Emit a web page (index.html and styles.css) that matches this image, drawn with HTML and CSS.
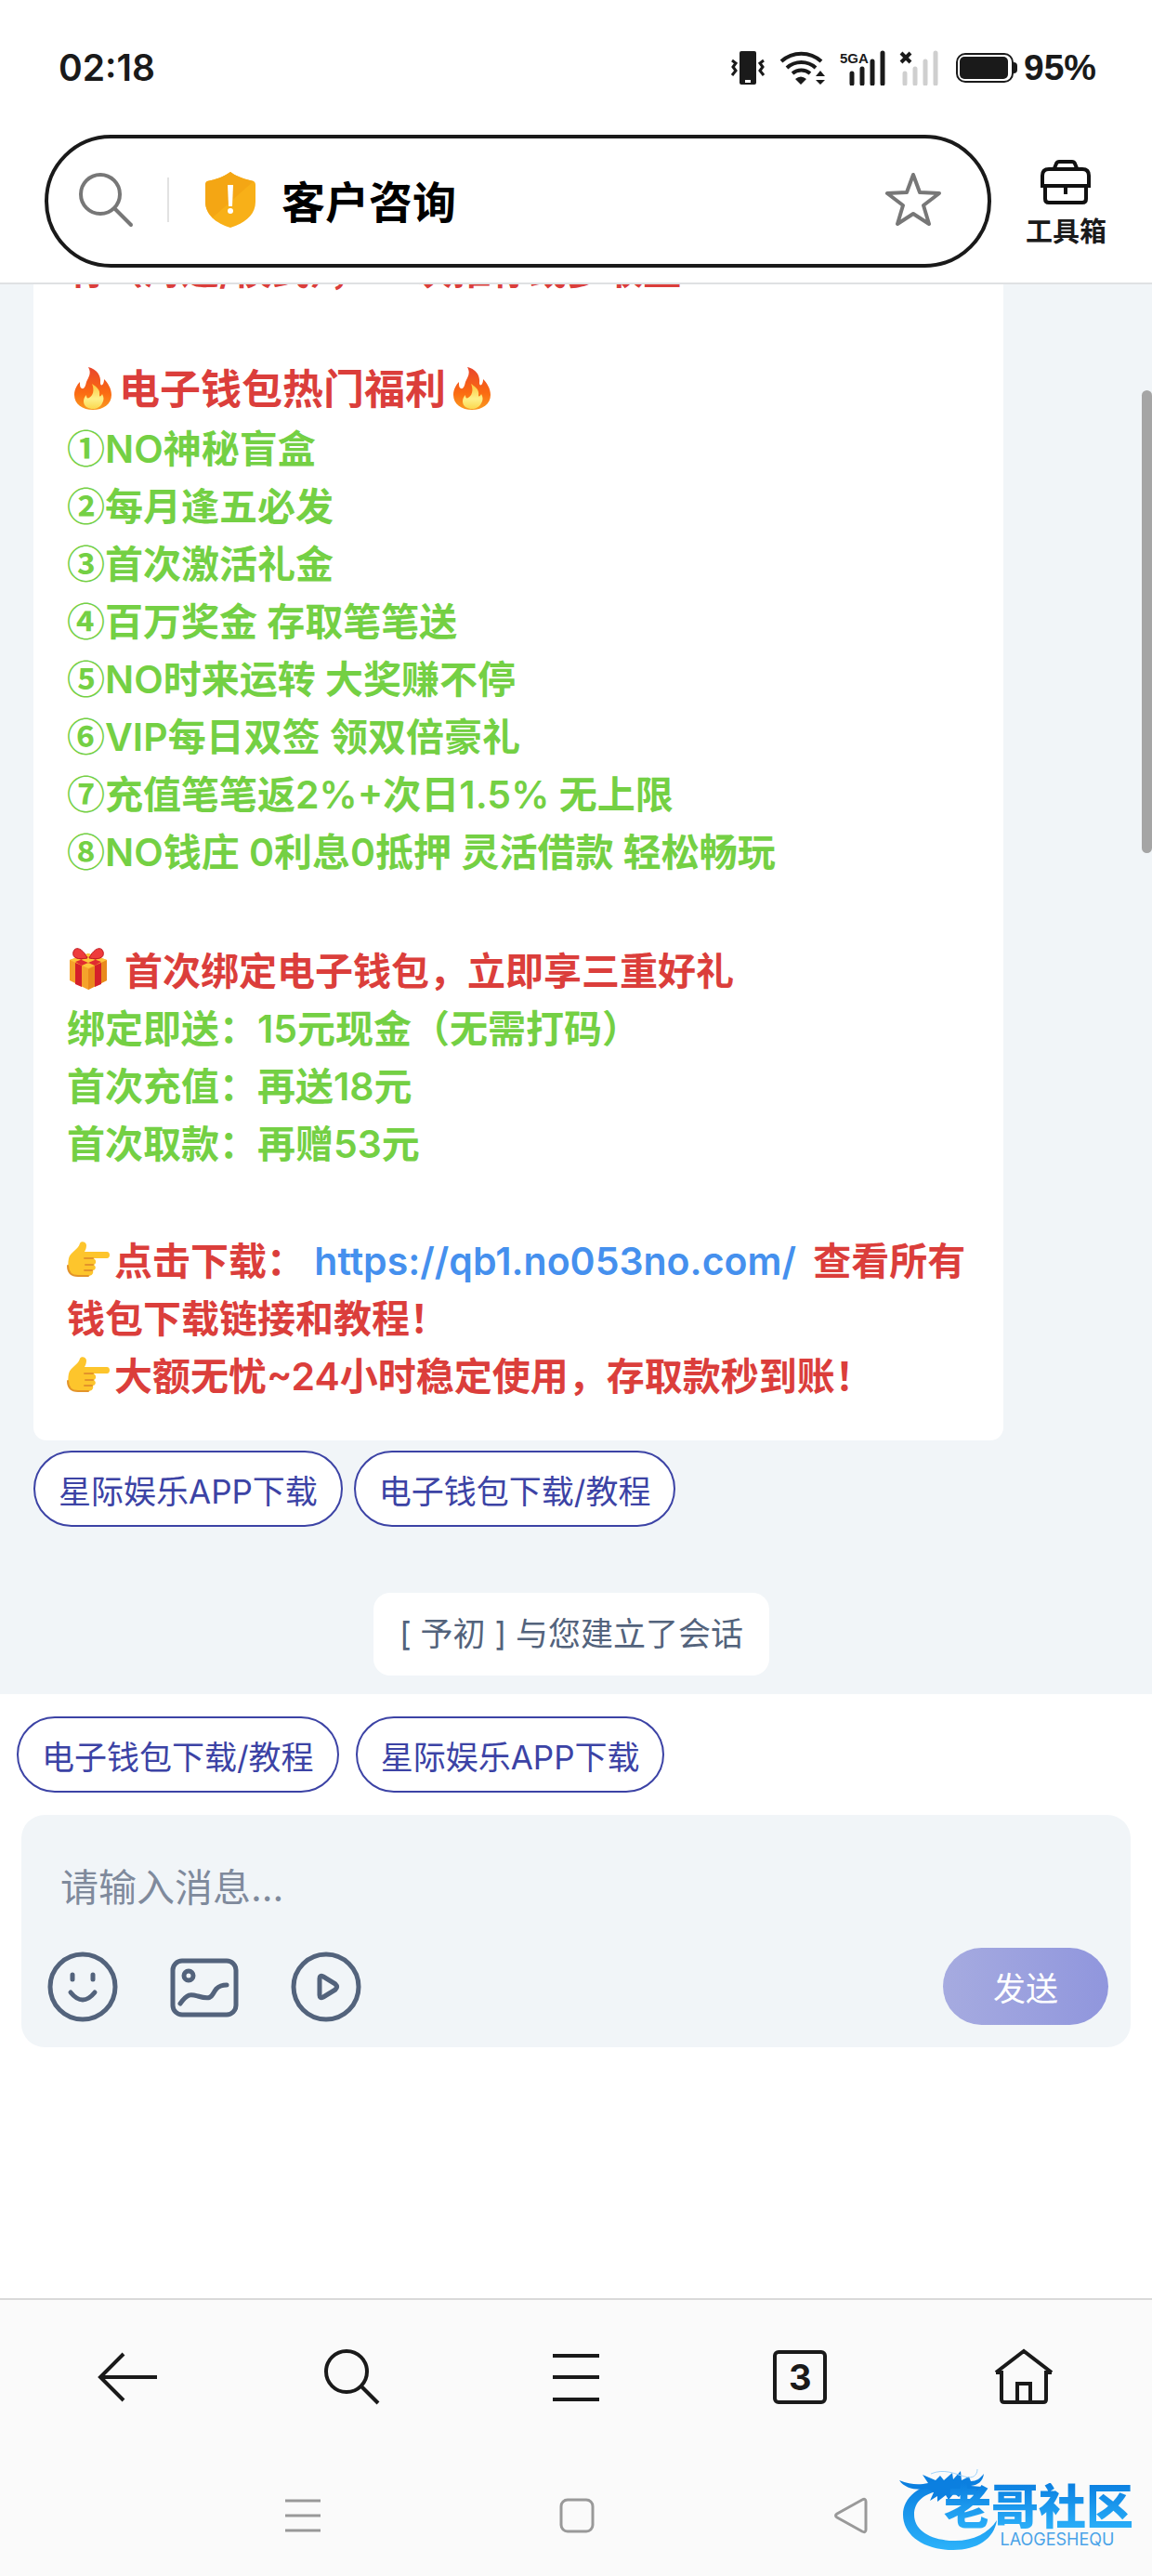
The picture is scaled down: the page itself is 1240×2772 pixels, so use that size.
FILE: index.html
```html
<!DOCTYPE html>
<html lang="zh-CN">
<head>
    <meta charset="UTF-8">
    <meta name="viewport" content="width=device-width, initial-scale=1.0">
    <title>客户咨询</title>
    <link rel="stylesheet" href="styles.css">
</head>
<body>

    <!-- Shared emoji -->
    <svg class="sprite" width="0" height="0">
        <defs>
            <linearGradient id="fire-g" x1="0" y1="0" x2="0" y2="1">
                <stop offset="0" stop-color="#e8452c"/>
                <stop offset="0.6" stop-color="#fb6a12"/>
                <stop offset="1" stop-color="#f99a20"/>
            </linearGradient>
            <linearGradient id="flame-g" x1="0" y1="0" x2="0" y2="1">
                <stop offset="0" stop-color="#fdc53c"/>
                <stop offset="0.6" stop-color="#fdf08a"/>
                <stop offset="1" stop-color="#fbd84e"/>
            </linearGradient>
            <linearGradient id="logo-g" x1="0" y1="0" x2="0" y2="1">
                <stop offset="0" stop-color="#0b7fe0"/>
                <stop offset="1" stop-color="#2cb2fa"/>
            </linearGradient>
        </defs>
        <symbol id="fire" viewBox="0 0 40 46">
            <path d="M15 0c9 2 14 9 13 17 0 3 2 3 3 1 1-2 1-4 1-5 4 4 8 10 8 17 0 10-9 16-20 16S0 40 0 30c0-6 3-11 6-14 0 4 0 6 2 7 3 1 4-3 5-7 2-5 6-9 2-16z" fill="url(#fire-g)"/>
            <path d="M19 18c6 4 9 7 8 12 0 3 2 1 3-1 2 3 2 7 0 10-2 4-6 6-10 6s-10-2-10-8c0-3 1-5 3-7 0 3 1 4 3 3 4-2 6-8 3-15z" fill="url(#flame-g)"/>
        </symbol>
        <symbol id="point" viewBox="0 0 46 38">
            <path d="M2 18C4 11 12 9 14 2c1-3 7-2 7 2 0 3-1 5-2 7h24c4 0 4 7 0 7H28c4 1 4 6 1 7 3 2 2 6-1 6 1 3-1 6-5 6H12C2 37 0 29 2 18z" fill="#fdc52c"/>
            <path d="M28 18h-9m9 7h-8m7 6h-8M23 37H12c-8 0-11-5-11-11" fill="none" stroke="#e3942a" stroke-width="2" stroke-linecap="round"/>
        </symbol>
    </svg>

    <header class="top">
        <div class="status">
            <span class="time">02:18</span>
            <div class="status-icons">
                <svg width="38" height="38" viewBox="0 0 38 38">
                    <path d="M12 1h14q2 0 2 2v32q0 2-2 2H12q-2 0-2-2V3q0-2 2-2zM16 32v3h6v-3z" fill="#1a1a1a" fill-rule="evenodd"/>
                    <path d="M2 11l4 3-3 4 3 4-4 5M36 11l-4 3 3 4-3 4 4 5" fill="none" stroke="#1a1a1a" stroke-width="3"/>
                </svg>
                <svg width="52" height="38" viewBox="0 0 52 38">
                    <path d="M3 12a32 32 0 0 1 43 0M9 19a23 23 0 0 1 31 0M15 25a15 15 0 0 1 19 0" fill="none" stroke="#1a1a1a" stroke-width="4"/>
                    <path d="M24 37l-6-6q6-5 12 0zM45 22l5 6H40zM45 37l5-5H40z" fill="#1a1a1a"/>
                </svg>
                <svg width="50" height="38" viewBox="0 0 50 38">
                    <text class="net-label" x="0" y="14">5GA</text>
                    <path d="M13 25v11M24 20v16M35 12v24M46 3v33" stroke="#1a1a1a" stroke-width="5" stroke-linecap="round"/>
                </svg>
                <svg width="42" height="38" viewBox="0 0 42 38">
                    <path d="M2 3l10 10M12 3L2 13" stroke="#1a1a1a" stroke-width="4"/>
                    <path d="M6 25v11M17 20v16M28 12v24M39 3v33" stroke="#cfcfcf" stroke-width="5" stroke-linecap="round"/>
                </svg>
                <svg class="battery" width="68" height="34" viewBox="0 0 68 34">
                    <rect x="2" y="2" width="60" height="30" rx="9" fill="none" stroke="#1a1a1a" stroke-width="2"/>
                    <rect x="5" y="5" width="52" height="24" rx="5" fill="#1a1a1a"/>
                    <path d="M63 11q4 0 4 4v4q0 4-4 4z" fill="#1a1a1a"/>
                </svg>
                <span class="percent">95%</span>
            </div>
        </div>

        <div class="address-row">
            <div class="address">
                <svg width="60" height="60" viewBox="0 0 60 60" fill="none" stroke="#777" stroke-width="4" stroke-linecap="round">
                    <circle cx="24" cy="24" r="21"/>
                    <path d="M40 40l17 17"/>
                </svg>
                <span class="divider"></span>
                <svg width="54" height="60" viewBox="0 0 54 60">
                    <path d="M27 0c8 6 16 8 25 10 2 1 2 3 2 5v17c0 14-11 23-27 28C11 55 0 46 0 32V15c0-2 0-4 2-5C11 8 19 6 27 0z" fill="#f8b018"/>
                    <path d="M27 0c8 6 16 8 25 10L8 49C3 44 0 39 0 32V15c0-2 0-4 2-5C11 8 19 6 27 0z" fill="#f4a614"/>
                    <path d="M24 14h6l-1 23h-4z" fill="#fff"/>
                    <circle cx="27" cy="42" r="3" fill="#fff"/>
                </svg>
                <h1>客户咨询</h1>
                <svg width="60" height="60" viewBox="0 0 60 60" fill="none" stroke="#777" stroke-width="4" stroke-linejoin="round">
                    <path d="M30 3l7 19 21 1-17 13 6 20-17-11-17 11 6-20L2 23l21-1z"/>
                </svg>
            </div>
            <a class="toolbox" href="#">
                <svg width="54" height="48" viewBox="0 0 54 48" fill="none" stroke="#111" stroke-width="4">
                    <path d="M15 9l2-5q1-2 3-2h14q2 0 3 2l2 5M2 28V17q0-7 7-7h36q7 0 7 7v11zM5 28v14q0 4 4 4h36q4 0 4-4V28M27 28v9"/>
                </svg>
                <span>工具箱</span>
            </a>
        </div>
    </header>

    <main class="chat">
        <div class="message">
            <p class="red">有（海通/模式）， 一次推荐或多收益</p>
            <p class="red title"><svg class="fire" role="img" aria-label="🔥"><use href="#fire"/></svg>电子钱包热门福利<svg class="fire" role="img" aria-label="🔥"><use href="#fire"/></svg></p>
            <p class="green"><span class="num">①</span>NO神秘盲盒<br>
            <span class="num">②</span>每月逢五必发<br>
            <span class="num">③</span>首次激活礼金<br>
            <span class="num">④</span>百万奖金 存取笔笔送<br>
            <span class="num">⑤</span>NO时来运转 大奖赚不停<br>
            <span class="num">⑥</span>VIP每日双签 领双倍豪礼<br>
            <span class="num">⑦</span>充值笔笔返2%+次日1.5% 无上限<br>
            <span class="num">⑧</span>NO钱庄 0利息0抵押 灵活借款 轻松畅玩</p>
            <p class="red gift-line"><svg class="gift" viewBox="0 0 46 46" role="img" aria-label="🎁">
                <path d="M3 13l20-7 20 7v22l-20 10L3 35z" fill="#f5a32b"/>
                <path d="M23 23l20-10v22L23 45z" fill="#e98a1c"/>
                <path d="M3 13l20-7 20 7-20 9z" fill="#fdc63a"/>
                <path d="M9 16l7 3v23l-7-3zM30 19l7-3v23l-7 3z" fill="#d5202a"/>
                <path d="M9 15L31 7l6 3-21 9zM37 15L15 7l-6 3 21 9z" fill="#e02c30"/>
                <path d="M22 11C12 13 5 11 7 4c2-6 10-4 15 7zM24 11c10 2 17 0 15-7-2-6-10-4-15 7z" fill="#ee3b3b" stroke="#c01820" stroke-width="1"/>
            </svg>首次绑定电子钱包，立即享三重好礼</p>
            <p class="green">绑定即送：15元现金（无需打码）<br>
            首次充值：再送18元<br>
            首次取款：再赠53元</p>
            <p class="red links"><svg class="point" role="img" aria-label="👉"><use href="#point"/></svg>点击下载： <a href="#">https://qb1.no053no.com/</a> 查看所有<br>
            钱包下载链接和教程！<br>
            <svg class="point" role="img" aria-label="👉"><use href="#point"/></svg>大额无忧~24小时稳定使用，存取款秒到账！</p>
        </div>
        <div class="replies">
            <button class="chip">星际娱乐APP下载</button>
            <button class="chip">电子钱包下载/教程</button>
        </div>
        <div class="notice">[ 予初 ] 与您建立了会话</div>
        <span class="scrollbar"></span>
    </main>

    <section class="composer">
        <div class="shortcuts">
            <button class="chip">电子钱包下载/教程</button>
            <button class="chip">星际娱乐APP下载</button>
        </div>
        <form class="input-box">
            <input type="text" placeholder="请输入消息..." aria-label="请输入消息">
            <div class="tools">
                <button type="button" class="icon-btn" aria-label="表情">
                    <svg width="76" height="76" viewBox="0 0 76 76" fill="none" stroke="#53637c" stroke-width="5" stroke-linecap="round">
                        <circle cx="38" cy="38" r="35"/>
                        <path d="M27 25v5M49 25v5M25 44q13 16 26 0"/>
                    </svg>
                </button>
                <button type="button" class="icon-btn" aria-label="图片">
                    <svg width="76" height="76" viewBox="0 0 76 76" fill="none" stroke="#53637c" stroke-width="5" stroke-linecap="round">
                        <rect x="4" y="10" width="68" height="58" rx="10"/>
                        <circle cx="21" cy="26" r="5"/>
                        <path d="M12 56c8-11 11-10 19-8 17 5 14-1 20-8 3-3 6-4 11-4"/>
                    </svg>
                </button>
                <button type="button" class="icon-btn" aria-label="视频">
                    <svg width="76" height="76" viewBox="0 0 76 76" fill="none" stroke="#53637c" stroke-width="5" stroke-linejoin="round">
                        <circle cx="38" cy="38" r="35"/>
                        <path d="M31 29v18q0 4 4 2l13-8q3-3 0-6l-13-8q-4-2-4 2z"/>
                    </svg>
                </button>
                <button type="submit" class="send">发送</button>
            </div>
        </form>
    </section>

    <footer class="bottom">
        <nav class="browser-nav">
            <a href="#" aria-label="返回">
                <svg width="68" height="64" viewBox="0 0 68 64"><path d="M65 32H4M29 7L4 32l25 25"/></svg>
            </a>
            <a href="#" aria-label="搜索">
                <svg width="64" height="64" viewBox="0 0 64 64"><circle cx="26" cy="26" r="22"/><path d="M42 42l18 18"/></svg>
            </a>
            <a href="#" aria-label="菜单">
                <svg width="56" height="64" viewBox="0 0 56 64"><path d="M3 9h50M3 32h50M3 56h50"/></svg>
            </a>
            <a href="#" aria-label="标签页"><span class="tabs">3</span></a>
            <a href="#" aria-label="主页">
                <svg width="64" height="64" viewBox="0 0 64 64"><path d="M2 27L32 4l30 23M2 27h6v29q0 3 3 3h42q3 0 3-3V27h6M25 59V39h14v20"/></svg>
            </a>
        </nav>
        <div class="system-nav">
            <svg width="40" height="40" viewBox="0 0 40 40"><path d="M1 4h38M1 20h38M1 36h38"/></svg>
            <svg width="40" height="40" viewBox="0 0 40 40"><rect x="3" y="3" width="34" height="34" rx="7"/></svg>
            <svg width="40" height="40" viewBox="0 0 40 40"><path d="M36 5v30q0 4-4 2L5 22q-3-2 0-4L32 3q4-2 4 2z"/></svg>
        </div>
        <div class="watermark">
            <svg width="124" height="92" viewBox="0 0 124 92">
                <path d="M48 17C21 19 4 34 4 52c0 22 22 38 54 38 26 0 44-12 47-32-9 14-25 22-45 22-26 0-44-11-44-28 0-14 10-23 32-27z" fill="url(#logo-g)"/>
                <path d="M0 15c12 5 22 5 31 3l-6-9 14 6 5-5 4 5 9-8 1 7 8-9 1 10 8-4 2 5c6 0 10-3 14-8-1 8-6 12-14 13l12 1-5 5-14-1-6 7-5-4-6 7-3-5-9 7v-6l-8 5 4-9-7-4C18 26 6 24 0 15z" fill="#0b7fe0"/>
                <path d="M34 8C48 2 60 8 70 11s14-2 14-8" fill="none" stroke="#9fd2fa" stroke-width="1"/>
            </svg>
            <div class="mark-text">
                <strong>老哥社区</strong>
                <small>LAOGESHEQU</small>
            </div>
        </div>
    </footer>

</body>
</html>
```
FILE: styles.css
```css
* {
    box-sizing: border-box;
}
body {
    font-family: Inter, "Noto Sans CJK SC", sans-serif;
    margin: 0;
    height: 100vh;
    display: flex;
    flex-direction: column;
    background-color: #fff;
    color: #1a1a1a;
}
svg {
    display: block;
    flex: none;
}
a {
    text-decoration: none;
    color: inherit;
}
button, input {
    font-family: inherit;
    border: none;
    margin: 0;
    padding: 0;
}
.sprite {
    position: absolute;
}

/* Header */
.top {
    flex: none;
    background-color: #fff;
    border-bottom: 2px solid #dfe1e3;
}
.status {
    display: flex;
    align-items: center;
    justify-content: space-between;
    height: 145px;
    padding: 0 60px 0 63px;
}
.time {
    font-size: 39px;
    font-weight: 600;
}
.status-icons {
    display: flex;
    align-items: center;
    gap: 14px;
}
.net-label {
    font-family: "Liberation Sans", sans-serif;
    font-size: 15px;
    font-weight: bold;
    fill: #1a1a1a;
}
.battery {
    margin-left: 4px;
}
.percent {
    margin-left: -8px;
    font-family: "Liberation Sans", sans-serif;
    font-size: 39px;
    font-weight: bold;
}
.address-row {
    display: flex;
    align-items: center;
    gap: 37px;
    padding: 0 49px 16px 48px;
}
.address {
    flex: 1;
    display: flex;
    align-items: center;
    height: 143px;
    padding: 0 50px 4px 32px;
    border: 4px solid #1a1a1a;
    border-radius: 72px;
}
.divider {
    width: 2px;
    height: 48px;
    margin: 0 39px 0 36px;
    background-color: #e2e2e2;
}
.address h1 {
    flex: 1;
    margin: 0 0 0 28px;
    padding-top: 6px;
    font-size: 47px;
    line-height: 64px;
    font-weight: bold;
    color: #000;
}
.toolbox {
    display: flex;
    flex-direction: column;
    align-items: center;
    gap: 12px;
    padding-top: 6px;
    font-size: 29px;
    line-height: 36px;
    font-weight: bold;
}

/* Chat */
.chat {
    flex: 1;
    min-height: 0;
    position: relative;
    display: flex;
    flex-direction: column;
    justify-content: flex-end;
    align-items: flex-start;
    overflow: hidden;
    padding: 0 160px 20px 36px;
    background-color: #f1f5f8;
}
.message {
    flex: none;
    align-self: stretch;
    padding: 38px 36px;
    border-radius: 14px;
    background-color: #fff;
    font-size: 41px;
    line-height: 62px;
    font-weight: 600;
}
.message p {
    margin: 0;
}
.message a {
    margin-right: 8px;
    color: #4590ee;
}
.red {
    color: #db3e3b;
}
.green {
    color: #74d044;
}
.message .title, .message .links {
    margin-top: 64px;
}
.message .gift-line {
    margin-top: 66px;
}
.title {
    font-size: 44px;
    line-height: 66px;
}
.num {
    font-family: "Noto Sans CJK SC", sans-serif;
    line-height: 1;
}
.fire, .gift, .point {
    display: inline-block;
    vertical-align: -6px;
}
.fire {
    width: 40px;
    height: 46px;
    margin: 0 8px;
}
.gift {
    width: 46px;
    height: 46px;
    margin-right: 16px;
}
.point {
    width: 46px;
    height: 38px;
    margin-right: 5px;
    vertical-align: -2px;
}
.replies, .shortcuts {
    display: flex;
}
.replies {
    flex: none;
    gap: 12px;
    margin-top: 11px;
}
.chip {
    height: 82px;
    padding: 0 25px;
    border: 2px solid #3c43a5;
    border-radius: 41px;
    background-color: #fff;
    color: #3c43a5;
    font-size: 35px;
}
.notice {
    flex: none;
    align-self: center;
    margin: 71px -114px 0 0;
    padding: 0 28px;
    border-radius: 18px;
    background-color: #fff;
    color: #53637c;
    font-size: 35px;
    line-height: 89px;
}
.scrollbar {
    position: absolute;
    top: 114px;
    right: 0;
    width: 11px;
    height: 498px;
    border-radius: 6px;
    background-color: #a5a5a5;
}

/* Message input */
.composer {
    flex: none;
    padding: 24px 23px 270px;
}
.shortcuts {
    gap: 18px;
    margin: 0 0 24px -5px;
}
.input-box {
    padding: 46px 24px 24px;
    border-radius: 25px;
    background-color: #f1f5f8;
}
.input-box input {
    display: block;
    width: 100%;
    height: 64px;
    padding: 0 18px;
    background: none;
    font-size: 41px;
    color: #53637c;
}
.input-box input::placeholder {
    color: #7f8a9c;
}
.tools {
    display: flex;
    align-items: center;
    gap: 55px;
    margin-top: 33px;
    padding-left: 4px;
}
.icon-btn {
    background: none;
}
.send {
    width: 178px;
    height: 83px;
    margin-left: auto;
    border-radius: 42px;
    background: linear-gradient(90deg, #a6abe0, #9096dd);
    color: #fff;
    font-size: 35px;
}

/* Bottom bars */
.bottom {
    flex: none;
    position: relative;
    border-top: 2px solid #d9d9d9;
    background-color: #fafafa;
}
.bottom svg {
    fill: none;
    stroke: #1a1a1a;
    stroke-width: 4;
}
.browser-nav {
    display: flex;
    height: 166px;
    padding: 0 17px;
}
.browser-nav a {
    flex: 1;
    display: flex;
    align-items: center;
    justify-content: center;
}
.tabs {
    width: 58px;
    line-height: 50px;
    border: 4px solid #1a1a1a;
    border-radius: 6px;
    text-align: center;
    font-size: 38px;
    font-weight: bold;
}
.system-nav {
    display: flex;
    justify-content: space-between;
    padding: 46px 304px 45px 306px;
}
.bottom .system-nav svg {
    stroke: #999;
    stroke-width: 3;
}
.watermark {
    position: absolute;
    right: 20px;
    bottom: 26px;
    display: flex;
    align-items: flex-end;
}
.bottom .watermark svg {
    stroke: none;
}
.bottom .watermark path:nth-child(1) {
    fill: url(#logo-g);
}
.bottom .watermark path:nth-child(2) {
    fill: #0b7fe0;
}
.bottom .watermark path:nth-child(3) {
    stroke: #9fd2fa;
    stroke-width: 1;
}
.mark-text {
    display: flex;
    flex-direction: column;
    align-items: center;
    margin-left: -76px;
    padding-bottom: 4px;
}
.mark-text strong {
    font-size: 51px;
    line-height: 52px;
    font-weight: 900;
    background: linear-gradient(#0b7fe0, #2cb2fa);
    background-clip: text;
    -webkit-background-clip: text;
    color: transparent;
}
.mark-text small {
    font-size: 18px;
    line-height: 18px;
    margin-left: 40px;
    color: #4aa3e8;
}
```
